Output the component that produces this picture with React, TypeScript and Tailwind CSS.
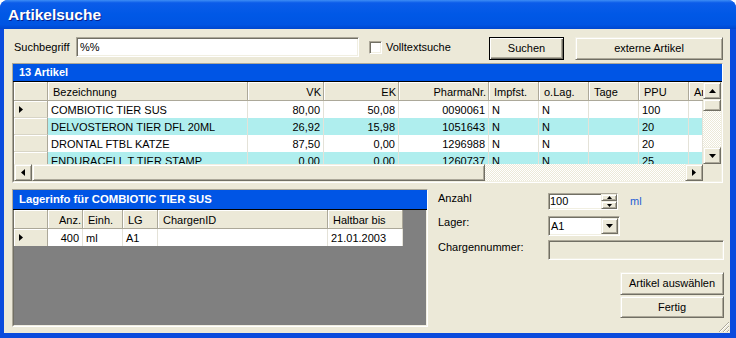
import React from "react";

const raised =
  "bg-[#ece9d8] border border-t-[#f1efe2] border-l-[#f1efe2] border-r-[#716f64] border-b-[#716f64] shadow-[inset_1px_1px_#fff,inset_-1px_-1px_#aca899]";
const sunken =
  "border border-t-[#aca899] border-l-[#aca899] border-r-white border-b-white shadow-[inset_1px_1px_#716f64,inset_-1px_-1px_#f1efe2]";
const checker =
  "bg-[image:repeating-conic-gradient(#ffffff_0%_25%,#ece9d8_0%_50%)] bg-[length:2px_2px]";
const headCell =
  "h-full shrink-0 flex items-center pt-[2px] border-r border-r-[#aca899] shadow-[inset_1px_1px_#fff] overflow-hidden whitespace-nowrap";

type Dir = "up" | "down" | "left" | "right";

function Arrow({ dir, small }: { dir: Dir; small?: boolean }) {
  if (small) {
    return (
      <svg width="5" height="3" className="block">
        <polygon points={dir === "up" ? "2.5,0 5,3 0,3" : "0,0 5,0 2.5,3"} fill="#000" />
      </svg>
    );
  }
  if (dir === "up" || dir === "down")
    return (
      <svg width="7" height="4" className="block">
        <polygon points={dir === "up" ? "3.5,0 7,4 0,4" : "0,0 7,0 3.5,4"} fill="#000" />
      </svg>
    );
  return (
    <svg width="4" height="7" className="block">
      <polygon points={dir === "right" ? "0,0 4,3.5 0,7" : "4,0 0,3.5 4,7"} fill="#000" />
    </svg>
  );
}

function RowMarker() {
  return (
    <svg width="4" height="7" className="block">
      <polygon points="0,0 4,3.5 0,7" fill="#000" />
    </svg>
  );
}

const cols = [
  { key: "name", label: "Bezeichnung", w: "w-[200px]", right: false },
  { key: "vk", label: "VK", w: "w-[76px]", right: true },
  { key: "ek", label: "EK", w: "w-[75px]", right: true },
  { key: "pzn", label: "PharmaNr.", w: "w-[90px]", right: true },
  { key: "impf", label: "Impfst.", w: "w-[50px]", right: false },
  { key: "olag", label: "o.Lag.", w: "w-[50px]", right: false },
  { key: "tage", label: "Tage", w: "w-[50px]", right: false },
  { key: "ppu", label: "PPU", w: "w-[50px]", right: false },
  { key: "art", label: "Art", w: "w-[14px]", right: false },
] as const;

type Article = Record<(typeof cols)[number]["key"], string>;

const articles: Article[] = [
  { name: "COMBIOTIC TIER SUS", vk: "80,00", ek: "50,08", pzn: "0090061", impf: "N", olag: "N", tage: "", ppu: "100", art: "" },
  { name: "DELVOSTERON TIER DFL 20ML", vk: "26,92", ek: "15,98", pzn: "1051643", impf: "N", olag: "N", tage: "", ppu: "20", art: "" },
  { name: "DRONTAL FTBL KATZE", vk: "87,50", ek: "0,00", pzn: "1296988", impf: "N", olag: "N", tage: "", ppu: "20", art: "" },
  { name: "ENDURACELL T TIER STAMP", vk: "0,00", ek: "0,00", pzn: "1260737", impf: "N", olag: "N", tage: "", ppu: "25", art: "" },
];

const stockCols = [
  { label: "Anz.", w: "w-[35px]", right: true },
  { label: "Einh.", w: "w-[40px]", right: false },
  { label: "LG", w: "w-[35px]", right: false },
  { label: "ChargenID", w: "w-[170px]", right: false },
  { label: "Haltbar bis", w: "w-[75px]", right: false },
];
const stockRow = ["400", "ml", "A1", "", "21.01.2003"];

function ArticleGrid() {
  return (
    <div className="w-[711px] h-[120px] shrink-0 flex flex-col border border-[#aca899] border-r-white border-b-white">
      <div className="h-[18px] shrink-0 flex items-center pl-[6px] bg-[#0055e5] border-b border-black text-white font-bold">
        13 Artikel
      </div>
      <div className="flex flex-1 min-h-0 border-l border-l-[#716f64] border-r border-r-[#f1efe2] border-b border-b-[#f1efe2]">
        <div className="w-[689px] flex flex-col">
          <div className="h-[19px] shrink-0 flex bg-[#ece9d8] border-b border-b-[#aca899]">
            <div className={`${headCell} w-[34px]`} />
            {cols.map((c) => (
              <div
                key={c.key}
                className={`${headCell} ${c.w} ${c.right ? "justify-end pr-[2px]" : "pl-[5px]"} ${c.key === "art" ? "border-r-0 pl-[3px]" : ""}`}
              >
                {c.label}
              </div>
            ))}
          </div>
          <div className="h-[63px] shrink-0 overflow-hidden">
            {articles.map((a, i) => (
              <div key={a.pzn} className={`h-[17px] flex ${i % 2 ? "bg-[#afeeee]" : "bg-white"}`}>
                <div className="w-[34px] shrink-0 h-full flex items-center pl-[5px] bg-[#ece9d8] border-r border-r-[#aca899] border-b border-b-[#d8d5c6] shadow-[inset_1px_1px_#fff]">
                  {i === 0 && <RowMarker />}
                </div>
                {cols.map((c) => (
                  <div
                    key={c.key}
                    className={`${c.w} shrink-0 h-full flex items-center pt-[2px] whitespace-nowrap overflow-hidden border-r border-r-[#e4e2d8] ${c.right ? "justify-end pr-[3px]" : "pl-[3px]"}`}
                  >
                    {a[c.key]}
                  </div>
                ))}
              </div>
            ))}
          </div>
          <div className="h-[17px] shrink-0 flex">
            <div className={`${raised} w-[18px] h-full flex items-center justify-center`}>
              <Arrow dir="left" />
            </div>
            <div className={`${raised} w-[453px] h-full`} />
            <div className={`${checker} flex-1 h-full`} />
            <div className={`${raised} w-[18px] h-full flex items-center justify-center`}>
              <Arrow dir="right" />
            </div>
          </div>
        </div>
        <div className="w-[18px] flex flex-col">
          <div className="h-[82px] shrink-0 flex flex-col">
            <div className={`${raised} h-[17px] shrink-0 flex items-center justify-center`}>
              <Arrow dir="up" />
            </div>
            <div className={`${raised} h-[12px] shrink-0`} />
            <div className={`${checker} flex-1`} />
            <div className={`${raised} h-[17px] shrink-0 flex items-center justify-center`}>
              <Arrow dir="down" />
            </div>
          </div>
          <div className="flex-1 bg-[#ece9d8]" />
        </div>
      </div>
    </div>
  );
}

function StockGrid() {
  return (
    <div className="w-[416px] h-[138px] shrink-0 flex flex-col border border-[#aca899] border-r-white border-b-white">
      <div className="h-[20px] shrink-0 flex items-center pl-[6px] bg-[#0055e5] border-b border-black text-white font-bold text-[11.3px]">
        Lagerinfo für COMBIOTIC TIER SUS
      </div>
      <div className="flex-1 flex flex-col bg-[#808080] border-l border-l-[#716f64] border-r border-r-[#f1efe2] border-b border-b-[#f1efe2]">
        <div className="h-[19px] flex self-start bg-[#ece9d8] border-b border-b-[#aca899]">
          <div className={`${headCell} w-[34px]`} />
          {stockCols.map((c) => (
            <div key={c.label} className={`${headCell} ${c.w} ${c.right ? "justify-end pr-[1px]" : "pl-[5px]"}`}>
              {c.label}
            </div>
          ))}
        </div>
        <div className="h-[17px] flex self-start bg-white">
          <div className="w-[34px] shrink-0 h-full flex items-center pl-[5px] bg-[#ece9d8] border-r border-r-[#aca899] shadow-[inset_1px_1px_#fff]">
            <RowMarker />
          </div>
          {stockCols.map((c, i) => (
            <div
              key={c.label}
              className={`${c.w} shrink-0 h-full flex items-center pt-[1px] whitespace-nowrap border-r border-r-[#e4e2d8] ${c.right ? "justify-end pr-[3px]" : "pl-[3px]"}`}
            >
              {stockRow[i]}
            </div>
          ))}
        </div>
      </div>
    </div>
  );
}

function Selection() {
  return (
    <div className="w-[286px] ml-[10px] flex flex-col pt-[4px]">
      <div className="h-[17px] flex items-start">
        <span className="w-[110px] leading-[13px] -mt-[1px]">Anzahl</span>
        <div className={`${sunken} w-[70px] h-[17px] bg-white flex`}>
          <span className="flex-1 pl-[1px] leading-[15px]">100</span>
          <div className="w-[16px] flex flex-col">
            <div className={`${raised} h-[7px] flex items-center justify-center`}>
              <Arrow dir="up" small />
            </div>
            <div className={`${raised} h-[8px] flex items-center justify-center`}>
              <Arrow dir="down" small />
            </div>
          </div>
        </div>
        <span className="ml-[12px] mt-[2px] leading-[13px] text-[#1f5fd6]">ml</span>
      </div>
      <div className="h-[20px] mt-[6px] flex items-start">
        <span className="w-[110px] leading-[13px]">Lager:</span>
        <div className={`${sunken} w-[72px] h-[20px] bg-white flex p-[1px]`}>
          <span className="flex-1 pl-[1px] leading-[16px]">A1</span>
          <div className={`${raised} w-[17px] h-full flex items-center justify-center`}>
            <Arrow dir="down" />
          </div>
        </div>
      </div>
      <div className="h-[20px] mt-[4px] flex items-start">
        <span className="w-[110px] leading-[13px] mt-[1px]">Chargennummer:</span>
        <div className={`${sunken} w-[176px] h-[20px] bg-[#ece9d8]`} />
      </div>
      <button className={`${raised} self-end mt-[12px] w-[104px] h-[23px]`}>Artikel auswählen</button>
      <button className={`${raised} self-end mt-[1px] w-[104px] h-[22px]`}>Fertig</button>
    </div>
  );
}

export default function App() {
  return (
    <div className="w-[736px] h-[338px] flex flex-col bg-[#0a4bdd] rounded-t-[8px] overflow-hidden font-['Liberation_Sans',Arial,sans-serif] text-[11px] text-black">
      <div className="h-[29px] shrink-0 flex items-center pl-[8px] bg-[linear-gradient(180deg,#3d8df5_0%,#0b5ce9_10%,#0058e6_50%,#0055e3_85%,#0047cf_100%)]">
        <span className="text-white font-bold text-[15.5px] leading-none [text-shadow:1px_1px_#0a1f8a]">Artikelsuche</span>
      </div>
      <div className="relative flex-1 ml-[4px] mr-[6px] mb-[5px] bg-[#ece9d8] flex flex-col pl-[8px] pt-[8px]">
        <div className="h-[23px] flex items-start">
          <span className="w-[62px] ml-[2px] h-[20px] flex items-center">Suchbegriff</span>
          <div className={`${sunken} w-[283px] h-[20px] bg-white flex items-center pl-[3px]`}>%%</div>
          <div className="w-[120px] ml-[10px] h-[20px] flex items-center">
            <div className={`${sunken} w-[13px] h-[13px] bg-white`} />
            <span className="ml-[4px]">Volltextsuche</span>
          </div>
          <button className="w-[75px] h-[23px] bg-[#ece9d8] border border-black shadow-[inset_1px_1px_#fff,inset_-1px_-1px_#716f64,inset_-2px_-2px_#aca899]">
            Suchen
          </button>
          <button className={`${raised} ml-[11px] w-[148px] h-[23px]`}>externe Artikel</button>
        </div>
        <div className="mt-[3px]">
          <ArticleGrid />
        </div>
        <div className="mt-[6px] flex">
          <StockGrid />
          <Selection />
        </div>
        <svg width="12" height="12" className="absolute right-0 bottom-0">
          <path d="M11 1 L1 11 M11 5 L5 11 M11 9 L9 11" stroke="#aca899" strokeWidth="1" />
          <path d="M11 2 L2 11 M11 6 L6 11 M11 10 L10 11" stroke="#fff" strokeWidth="1" />
        </svg>
      </div>
    </div>
  );
}
